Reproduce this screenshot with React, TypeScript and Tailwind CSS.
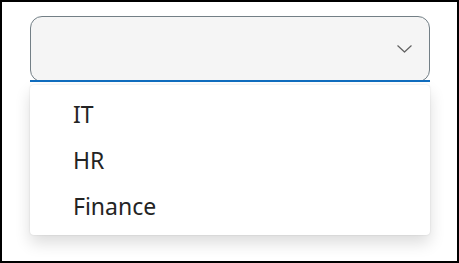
import React from 'react'

const options = ['IT', 'HR', 'Finance']

const Chevron = () => (
  <svg width="15" height="8" viewBox="0 0 15 8" fill="none" className="text-[#616161]">
    <path d="M0.8 0.8 L7.5 7 L14.2 0.8" stroke="currentColor" strokeWidth="1.2" strokeLinecap="round" strokeLinejoin="round" />
  </svg>
)

export default function App() {
  return (
    <div className="w-[459px] h-[263px] border-2 border-black bg-white pl-[28px] pt-[14px] font-['Noto_Sans',sans-serif]">
      <div className="w-[400px]">
        <div className="relative h-[66px] rounded-[12px] border border-[#737f86] bg-[#f5f5f5] flex items-center justify-end pr-[17px]">
          <Chevron />
          <div className="absolute left-[-1px] right-[-1px] bottom-[-1px] h-[2px] bg-[#0f6cbd]" />
        </div>
        <div className="mt-[3px] h-[150px] rounded-[4px] bg-white py-[6px] shadow-[0_0_2px_rgba(0,0,0,0.12),0_8px_16px_rgba(0,0,0,0.14)]">
          {options.map((o) => (
            <div key={o} className="h-[46px] flex items-center pl-[43px] text-[23px] text-[#242424] leading-none">
              {o}
            </div>
          ))}
        </div>
      </div>
    </div>
  )
}
